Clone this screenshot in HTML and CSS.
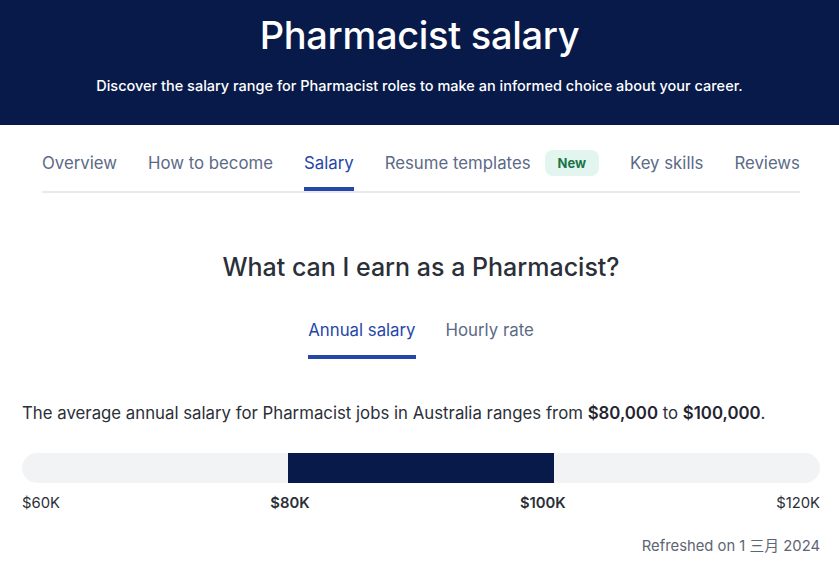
FILE: index.html
```html
<!DOCTYPE html>
<html lang="en">
<head>
<meta charset="utf-8">
<title>Pharmacist salary</title>
<link rel="stylesheet" href="styles.css">
</head>
<body>
<header class="hero">
  <h1 class="hero-title">Pharmacist salary</h1>
  <p class="hero-sub">Discover the salary range for Pharmacist roles to make an informed choice about your career.</p>
</header>
<nav class="tabs">
  <a class="tab">Overview</a>
  <a class="tab">How to become</a>
  <a class="tab active">Salary</a>
  <a class="tab">Resume templates <span class="badge">New</span></a>
  <a class="tab">Key skills</a>
  <a class="tab">Reviews</a>
</nav>
<main class="content">
  <h2 class="question">What can I earn as a Pharmacist?</h2>
  <div class="subtabs">
    <a class="subtab active">Annual salary</a>
    <a class="subtab">Hourly rate</a>
  </div>
  <p class="summary">The average annual salary for Pharmacist jobs in Australia ranges from <strong>$80,000</strong> to <strong>$100,000</strong>.</p>
  <div class="bar">
    <div class="bar-gap"></div>
    <div class="bar-fill"></div>
    <div class="bar-gap"></div>
  </div>
  <div class="scale">
    <span>$60K</span>
    <span class="strong">$80K</span>
    <span class="strong">$100K</span>
    <span>$120K</span>
  </div>
  <p class="refreshed">Refreshed on 1 三月 2024</p>
</main>
</body>
</html>
```
FILE: styles.css
```css
* { box-sizing: border-box; }
html, body { margin: 0; padding: 0; }
body {
  font-family: "Inter", "Noto Sans CJK SC", sans-serif;
  color: #2d3340;
  background: #fff;
  width: 839px;
}
.hero {
  background: #071a4a;
  color: #fff;
  height: 125px;
  display: flex;
  flex-direction: column;
  align-items: center;
  padding-top: 12px;
}
.hero-title {
  margin: 0;
  font-size: 38px;
  font-weight: 500;
  letter-spacing: -0.3px;
  line-height: 46px;
}
.hero-sub {
  margin: 18px 0 0;
  font-size: 14.5px;
  font-weight: 500;
  line-height: 20px;
}
.tabs {
  margin: 0 39px 0 42px;
  display: flex;
  justify-content: space-between;
  border-bottom: 2px solid #e8e9ef;
  height: 68px;
  padding-top: 24px;
}
.tab {
  font-size: 16.8px;
  color: #5b6a86;
  height: 42px;
  line-height: 28px;
  display: flex;
  align-items: flex-start;
  gap: 14px;
  margin-bottom: -2px;
}
.tab.active {
  color: #2447a8;
  border-bottom: 4px solid #2447a8;
}
.badge {
  background: #e2f6ef;
  color: #1a7548;
  font-size: 13px;
  font-weight: 700;
  border-radius: 8px;
  height: 26px;
  line-height: 26px;
  padding: 0 13px;
  margin-top: 1px;
}
.content {
  padding: 0 19px 0 22px;
}
.question {
  text-align: center;
  font-size: 25px;
  font-weight: 500;
  margin: 58px 0 0;
  line-height: 32px;
  color: #2b2f38;
}
.subtabs {
  display: flex;
  justify-content: center;
  gap: 30px;
  margin-top: 36px;
}
.subtab {
  font-size: 16.8px;
  color: #5b6a86;
  height: 40px;
  line-height: 22px;
}
.subtab.active {
  color: #2447a8;
  border-bottom: 4px solid #2447a8;
}
.summary {
  margin: 42px 0 0;
  font-size: 16.8px;
  line-height: 24px;
  color: #2b2f38;
}
.summary strong { font-weight: 600; color: #1f2430; }
.bar {
  margin-top: 28px;
  height: 30px;
  border-radius: 15px;
  background: #f2f3f5;
  display: grid;
  grid-template-columns: 1fr 1fr 1fr;
  overflow: hidden;
}
.bar-fill { background: #071a4a; }
.scale {
  display: flex;
  justify-content: space-between;
  margin-top: 10px;
  font-size: 14.8px;
  line-height: 20px;
  color: #2b2f38;
}
.scale .strong { font-weight: 600; }
.refreshed {
  text-align: right;
  margin: 23px 0 0;
  font-size: 14.8px;
  color: #5e6573;
  line-height: 20px;
}
```
